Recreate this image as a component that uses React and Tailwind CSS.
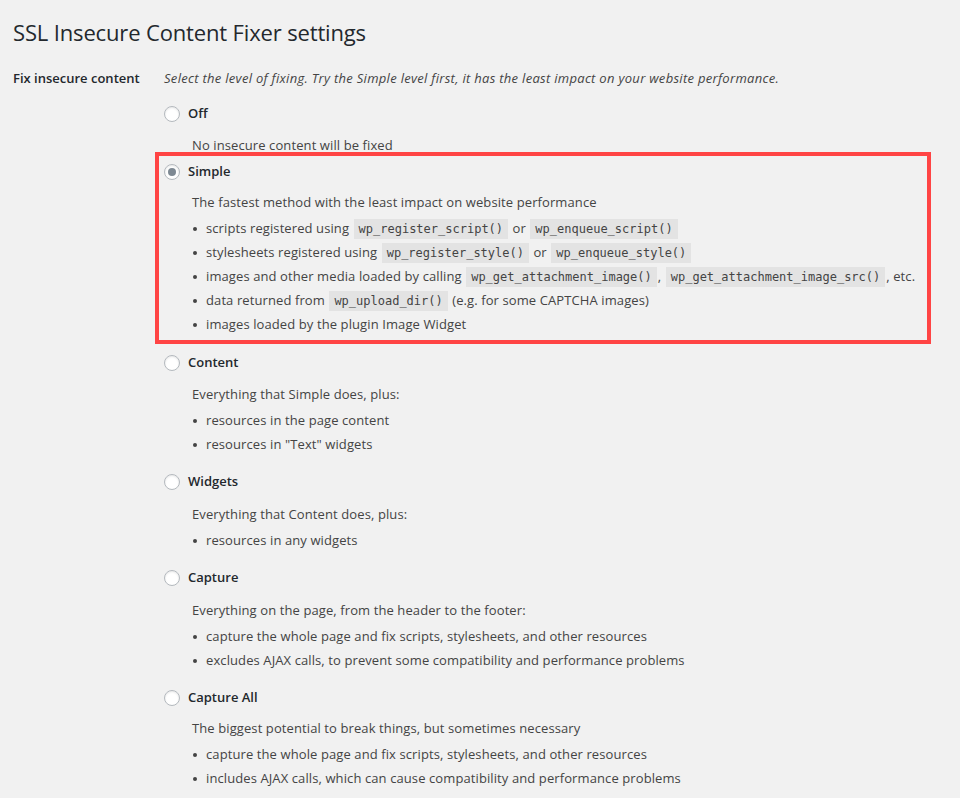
const options = [
  {
    key: 'off',
    label: 'Off',
    desc: 'No insecure content will be fixed',
    gap: 'mt-[7px]',
    items: [],
  },
  {
    key: 'simple',
    label: 'Simple',
    desc: 'The fastest method with the least impact on website performance',
    gap: 'mt-[6px]',
    items: [
      ['scripts registered using ', { code: 'wp_register_script()' }, ' or ', { code: 'wp_enqueue_script()' }],
      ['stylesheets registered using ', { code: 'wp_register_style()' }, ' or ', { code: 'wp_enqueue_style()' }],
      ['images and other media loaded by calling ', { code: 'wp_get_attachment_image()' }, ', ', { code: 'wp_get_attachment_image_src()' }, ', etc.'],
      ['data returned from ', { code: 'wp_upload_dir()' }, ' (e.g. for some CAPTCHA images)'],
      ['images loaded by the plugin Image Widget'],
    ],
  },
  {
    key: 'content',
    label: 'Content',
    desc: 'Everything that Simple does, plus:',
    gap: 'mt-[7px]',
    items: [['resources in the page content'], ['resources in "Text" widgets']],
  },
  {
    key: 'widgets',
    label: 'Widgets',
    desc: 'Everything that Content does, plus:',
    gap: 'mt-[8px]',
    items: [['resources in any widgets']],
  },
  {
    key: 'capture',
    label: 'Capture',
    desc: 'Everything on the page, from the header to the footer:',
    gap: 'mt-[8px]',
    items: [
      ['capture the whole page and fix scripts, stylesheets, and other resources'],
      ['excludes AJAX calls, to prevent some compatibility and performance problems'],
    ],
  },
  {
    key: 'capture_all',
    label: 'Capture All',
    desc: 'The biggest potential to break things, but sometimes necessary',
    gap: 'mt-[6px]',
    items: [
      ['capture the whole page and fix scripts, stylesheets, and other resources'],
      ['includes AJAX calls, which can cause compatibility and performance problems'],
    ],
  },
];

const Radio = ({ checked }) => (
  <span className="w-[16px] h-[16px] rounded-full border border-[#b4b9be] bg-white shadow-[inset_0_1px_2px_rgba(0,0,0,0.1)] flex items-center justify-center shrink-0">
    {checked && <span className="w-[8px] h-[8px] rounded-full bg-[#7e8993]" />}
  </span>
);

const Code = ({ children }) => (
  <code className="mx-[1px] px-[5px] pt-[3px] pb-[2px] bg-[#e3e3e3] font-['DejaVu_Sans_Mono',monospace] text-[12px] leading-[15px] tracking-normal text-[#444]">
    {children}
  </code>
);

const Option = ({ opt, checked }) => (
  <div>
    <label className="flex items-center gap-2 h-[24px]">
      <Radio checked={checked} />
      <span className="font-semibold text-[#23282d] tracking-normal">{opt.label}</span>
    </label>
    <p className={`${opt.gap} ml-[28px] leading-[24px]`}>{opt.desc}</p>
    {opt.items.length > 0 && (
      <ul className="mt-[3px] ml-[29px]">
        {opt.items.map((parts, i) => (
          <li key={i} className="flex items-center h-[24px] whitespace-pre">
            <span className="w-[4px] h-[4px] rounded-full bg-[#444] mr-[9px] shrink-0" />
            {parts.map((p, j) => (typeof p === 'string' ? <span key={j}>{p}</span> : <Code key={j}>{p.code}</Code>))}
          </li>
        ))}
      </ul>
    )}
  </div>
);

export default function App() {
  return (
    <div className="min-h-screen bg-[#f1f1f1] text-[#444] text-[13px] tracking-[0.1px] font-['Open_Sans',sans-serif] overflow-hidden">
      <h1 className="pt-[18px] pl-[13px] text-[22px] tracking-[-0.15px] leading-[29px] font-normal text-[#23282d]">
        SSL Insecure Content Fixer settings
      </h1>

      <div className="flex mt-[21px]">
        <div className="w-[164px] pl-[13px] shrink-0 font-semibold tracking-normal text-[#23282d] leading-[20px]">Fix insecure content</div>
        <div className="flex-1">
          <p className="italic leading-[20px] tracking-[0.3px]">
            Select the level of fixing. Try the Simple level first, it has the least impact on your website performance.
          </p>

          <div className="mt-[14px]">
            <Option opt={options[0]} />
          </div>

          <div className="-mt-[5px] -ml-[9px] w-[776px] border-4 border-[#ff4444] pl-[5px] pt-[4px] pb-[3px]">
            <Option opt={options[1]} checked />
          </div>

          <div className="mt-[7px] flex flex-col gap-[13px]">
            {options.slice(2).map((opt) => (
              <Option key={opt.key} opt={opt} />
            ))}
          </div>
        </div>
      </div>
    </div>
  );
}
